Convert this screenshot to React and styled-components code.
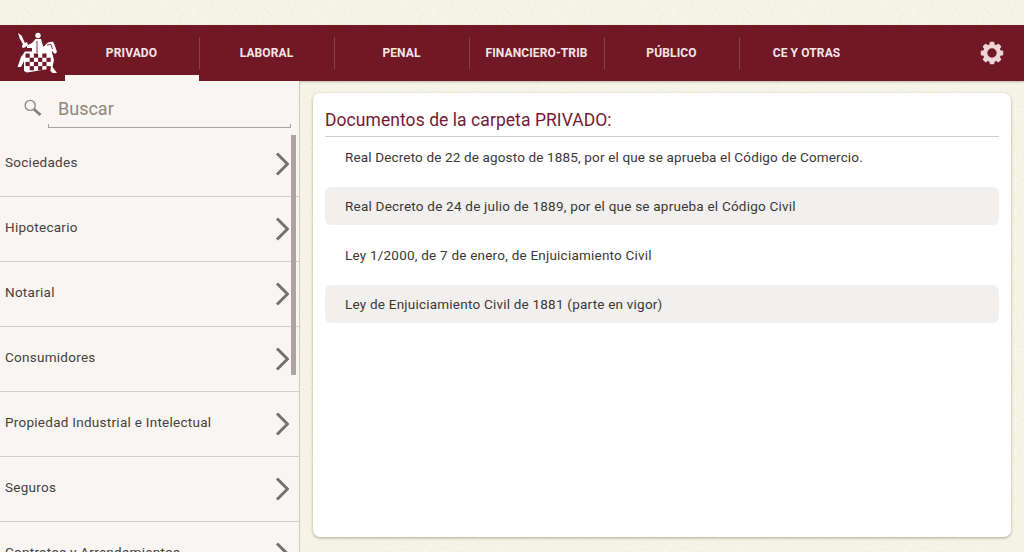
import styled, { createGlobalStyle } from 'styled-components';

const noise = `url("data:image/svg+xml,%3Csvg xmlns='http://www.w3.org/2000/svg' width='240' height='240'%3E%3Cfilter id='n'%3E%3CfeTurbulence type='fractalNoise' baseFrequency='0.7' numOctaves='4' stitchTiles='stitch'/%3E%3CfeColorMatrix values='0 0 0 0 0.8 0 0 0 0 0.8 0 0 0 0 0.6 0 0 0 1.3 -0.5'/%3E%3C/filter%3E%3Crect width='240' height='240' filter='url(%23n)'/%3E%3C/svg%3E")`;

const GlobalStyle = createGlobalStyle`
    html, body {
        margin: 0;
        height: 100%;
        overflow: hidden;
    }
    body {
        font-family: Roboto, "Liberation Sans", sans-serif;
        background-color: #f7f6ec;
        background-image: ${noise};
    }
    * {
        box-sizing: border-box;
    }
`;

const Page = styled.div`
    height: 552px;
    padding-top: 25px;
    display: flex;
    flex-direction: column;
`;

const TopBar = styled.nav`
    flex: 0 0 56px;
    display: flex;
    background: #701826;
    box-shadow: 0 1px 2px rgba(90, 70, 50, 0.35);
    position: relative;
`;

const LogoBox = styled.div`
    width: 65px;
    padding: 7px 0 0 17px;
`;

const Tab = styled.div`
    width: 135px;
    display: flex;
    align-items: center;
    justify-content: center;
    padding-right: 2px;
    font-size: 12px;
    font-weight: 700;
    letter-spacing: 0.12px;
    color: #f4e6e4;
    position: relative;

    &::before {
        content: '';
        display: ${props => (props.$active ? 'block' : 'none')};
        position: absolute;
        left: 0;
        right: 1px;
        bottom: 0;
        height: 6px;
        background: #f8f4f0;
    }

    &::after {
        content: '';
        display: ${props => (props.$last ? 'none' : 'block')};
        position: absolute;
        right: 0;
        top: 12px;
        height: 32px;
        width: 1px;
        background: #8d3f49;
    }
`;

const GearBox = styled.div`
    margin-left: auto;
    width: 64px;
    display: flex;
    align-items: center;
    justify-content: center;
`;

const Content = styled.div`
    flex: 1;
    min-height: 0;
    display: flex;
`;

const Sidebar = styled.aside`
    width: 300px;
    background: #f9f5f2;
    border-right: 1px solid #cfc9c2;
    position: relative;
    overflow: hidden;
`;

const SearchRow = styled.div`
    height: 51px;
    display: flex;
    padding: 0 8px 0 24px;
    align-items: flex-start;
`;

const SearchIcon = styled.svg`
    width: 18px;
    height: 18px;
    margin-top: 18px;
    margin-right: 6px;
`;

const SearchLine = styled.div`
    flex: 1;
    min-width: 0;
    height: 47px;
    position: relative;
    border-bottom: 1px solid #a8a39c;

    &::before,
    &::after {
        content: '';
        position: absolute;
        bottom: 0;
        width: 1px;
        height: 3px;
        background: #a8a39c;
    }

    &::before {
        left: 0;
    }

    &::after {
        right: 0;
    }
`;

const SearchField = styled.input`
    display: block;
    width: 100%;
    height: 100%;
    padding: 8px 0 0 10px;
    border: none;
    background: transparent;
    font-family: inherit;
    font-size: 18px;
    color: #8c8880;
    outline: none;

    &::placeholder {
        color: #8c8880;
        opacity: 1;
    }
`;

const MenuRow = styled.div`
    height: 65px;
    display: flex;
    align-items: center;
    justify-content: space-between;
    padding: 0 10px 4px 5px;
    border-bottom: 1px solid #d4cdc8;
    font-size: 13.5px;
    letter-spacing: 0.27px;
    color: #444140;
`;

const ChevronIcon = styled.svg`
    width: 14px;
    height: 24px;
    margin-top: 4px;
`;

const ScrollThumb = styled.div`
    position: absolute;
    right: 3px;
    top: 54px;
    width: 5px;
    height: 240px;
    background: #aaa5a0;
`;

const Main = styled.main`
    flex: 1;
    min-width: 0;
    padding: 12px 13px 15px 13px;
`;

const Card = styled.section`
    height: 100%;
    background: #fff;
    border-radius: 7px;
    padding: 12px 12px 0;
    box-shadow: 0 1px 3px rgba(110, 105, 80, 0.55);
`;

const Title = styled.h2`
    margin: 0;
    height: 32px;
    padding-top: 5px;
    font-size: 17.5px;
    font-weight: 400;
    letter-spacing: 0.06px;
    color: #741a35;
    border-bottom: 1px solid #d2d0ce;
`;

const DocList = styled.div`
    display: flex;
    flex-direction: column;
    gap: 11px;
    margin-top: 1px;
`;

const DocRow = styled.div`
    height: 38px;
    display: flex;
    align-items: center;
    padding-left: 20px;
    border-radius: 6px;
    font-size: 13.5px;
    letter-spacing: ${props => (props.$tight ? '0.15px' : '0.22px')};
    color: #3a3837;
    background: ${props => (props.$shaded ? '#f1f0ee' : 'transparent')};
`;

const tabs = ['PRIVADO', 'LABORAL', 'PENAL', 'FINANCIERO-TRIB', 'PÚBLICO', 'CE Y OTRAS'];

const folders = [
    'Sociedades',
    'Hipotecario',
    'Notarial',
    'Consumidores',
    'Propiedad Industrial e Intelectual',
    'Seguros',
    'Contratos y Arrendamientos',
];

const docs = [
    'Real Decreto de 22 de agosto de 1885, por el que se aprueba el Código de Comercio.',
    'Real Decreto de 24 de julio de 1889, por el que se aprueba el Código Civil',
    'Ley 1/2000, de 7 de enero, de Enjuiciamiento Civil',
    'Ley de Enjuiciamiento Civil de 1881 (parte en vigor)',
];

const Logo = () => {
    const checks = [];
    for (let r = 0; r < 4; r++) {
        for (let c = 0; c < 6; c++) {
            if ((r + c) % 2 === 0) {
                checks.push(<rect key={`${r}-${c}`} x={8.5 + c * 4.2} y={21.5 + r * 4.2} width="4.2" height="4.2" fill="#701826" />);
            }
        }
    }
    return (
        <svg width="41" height="42" viewBox="0 0 41 42">
            <g fill="#fff">
                {/* sword */}
                <path d="M1 1 L4.5 3.5 L8 11 L10 10 L11 13 L8 15.5 L5.5 16 L5 13.5 L6 12.5 L2.5 6 Z" />
                {/* rider */}
                <circle cx="21" cy="3.5" r="2.7" />
                <path d="M18.5 7 L24 7 L26 14 L29 18 L27 22 L15 22 L15 16 L10 16 L10 13.5 L15 11 Z" />
                {/* horse head and neck */}
                <path d="M26 15 L31 10.5 L36 9.5 L38 14 L40 20 L38 22 L34.5 18.5 L37 28 L35.5 35 L40 41 L35.5 41 L31.5 37 L10 40.5 L7 39 L7 29 L4 35 L0.5 35 L4 25 L8 19.5 L27 19.5 Z" />
            </g>
            {checks}
            <path d="M25.5 8 L27.5 14 M20 9 L20 21 M30 13 L34 12.5 L35.5 17" stroke="#701826" strokeWidth="0.9" fill="none" />
        </svg>
    );
};

const Gear = () => {
    const teeth = [0, 45, 90, 135, 180, 225, 270, 315];
    return (
        <svg width="24" height="24" viewBox="0 0 24 24">
            <circle cx="12" cy="12" r="6.9" fill="none" stroke="#efd6d6" strokeWidth="4.4" />
            {teeth.map(a => (
                <rect key={a} x="9.6" y="0.8" width="4.8" height="4" rx="1" fill="#efd6d6" transform={`rotate(${a} 12 12)`} />
            ))}
        </svg>
    );
};

const Chevron = () => (
    <ChevronIcon viewBox="0 0 14 24">
        <path d="M2 1.5 L12.5 12 L2 22.5" fill="none" stroke="#77716c" strokeWidth="3" />
    </ChevronIcon>
);

const App = () => {
    return (
        <>
            <GlobalStyle />
            <Page>
                <TopBar>
                    <LogoBox>
                        <Logo />
                    </LogoBox>
                    {tabs.map((tab, i) => (
                        <Tab key={tab} $active={i === 0} $last={i === tabs.length - 1}>
                            {tab}
                        </Tab>
                    ))}
                    <GearBox>
                        <Gear />
                    </GearBox>
                </TopBar>
                <Content>
                    <Sidebar>
                        <SearchRow>
                            <SearchIcon viewBox="0 0 18 18">
                                <circle cx="6.2" cy="6.4" r="5" fill="none" stroke="#8f8b86" strokeWidth="1.4" />
                                <path d="M10 10.2 L16.5 16" stroke="#827e79" strokeWidth="2.8" />
                            </SearchIcon>
                            <SearchLine>
                                <SearchField placeholder="Buscar" readOnly />
                            </SearchLine>
                        </SearchRow>
                        {folders.map(name => (
                            <MenuRow key={name}>
                                {name}
                                <Chevron />
                            </MenuRow>
                        ))}
                        <ScrollThumb />
                    </Sidebar>
                    <Main>
                        <Card>
                            <Title>Documentos de la carpeta PRIVADO:</Title>
                            <DocList>
                                {docs.map((doc, i) => (
                                    <DocRow key={doc} $shaded={i % 2 === 1} $tight={i === 0}>
                                        {doc}
                                    </DocRow>
                                ))}
                            </DocList>
                        </Card>
                    </Main>
                </Content>
            </Page>
        </>
    );
};

export default App;
